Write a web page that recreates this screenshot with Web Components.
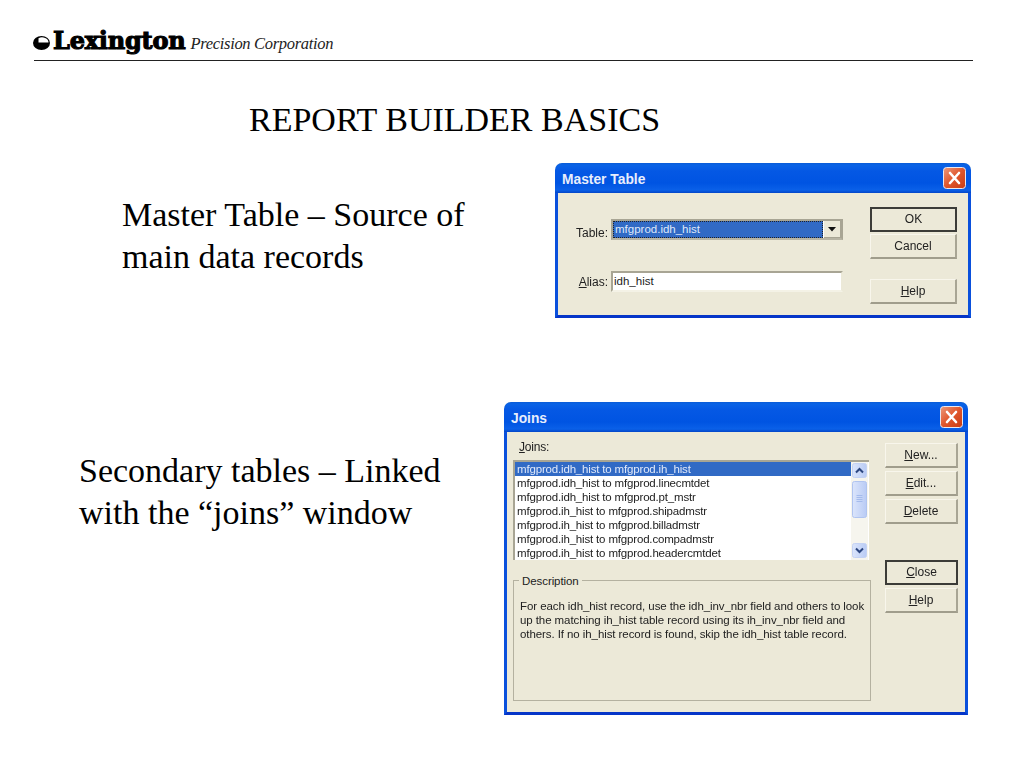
<!DOCTYPE html>
<html>
<head>
<meta charset="utf-8">
<title>Report Builder Basics</title>
<style>
  html, body { margin: 0; background: #fff; }
  body { font-family: "Liberation Serif", serif; color: #000; width: 1024px; height: 768px; overflow: hidden; }
</style>
</head>
<body>
<lex-header></lex-header>
<slide-title>REPORT BUILDER BASICS</slide-title>

<slide-row columns="555px 416px" gap="22px" height="155px" text-left="122px" text-top="31px">
  <span slot="text">Master Table – Source of<br>main data records</span>
  <xp-window caption="Master Table" width="416" height="155">
    <master-form></master-form>
  </xp-window>
</slide-row>

<slide-row columns="504px 464px" gap="84px" height="313px" text-left="79px" text-top="48px">
  <span slot="text">Secondary tables – Linked<br>with the “joins” window</span>
  <xp-window caption="Joins" width="464" height="313">
    <joins-form></joins-form>
  </xp-window>
</slide-row>

<script>
const UI_FONT = '"Liberation Sans", Arial, sans-serif';

class LexHeader extends HTMLElement {
  constructor() {
    super();
    this.attachShadow({ mode: 'open' }).innerHTML = `
      <style>
        :host {
          display: flex;
          align-items: flex-end;
          box-sizing: border-box;
          height: 61px;
          width: 939px;
          margin-left: 34px;
          border-bottom: 1px solid #222;
          padding-bottom: 5px;
        }
        svg { margin: 0 3px 5px -1px; }
        .name { font: bold 24px/28px "DejaVu Serif", serif; letter-spacing: -0.2px; -webkit-text-stroke: 1.1px #000; }
        .sub { font: italic 16.5px/22px "Liberation Serif", serif; margin-left: 5px; letter-spacing: -0.32px; color: #222; }
      </style>
      <svg width="17" height="14" viewBox="0 0 17 14">
        <ellipse cx="8.500" cy="7" rx="8.500" ry="7" fill="#000"/>
        <path d="M5.500 6.500V2.200A6.500 5 0 0 1 15.500 6.500z" fill="#fff"/>
      </svg>
      <span class="name">Lexington</span><span class="sub">Precision Corporation</span>`;
  }
}
customElements.define('lex-header', LexHeader);

class SlideTitle extends HTMLElement {
  constructor() {
    super();
    this.attachShadow({ mode: 'open' }).innerHTML = `
      <style>
        :host { display: block; margin: 38px 0 0 249px; height: 42px; font-size: 34px; line-height: 42px; white-space: nowrap; }
      </style>
      <slot></slot>`;
  }
}
customElements.define('slide-title', SlideTitle);

class SlideRow extends HTMLElement {
  constructor() {
    super();
    this.attachShadow({ mode: 'open' }).innerHTML = `
      <style>
        :host { display: grid; font-size: 34px; line-height: 42px; }
        .text { white-space: nowrap; }
      </style>
      <div class="text"><slot name="text"></slot></div>
      <div><slot></slot></div>`;
  }
  connectedCallback() {
    this.style.gridTemplateColumns = this.getAttribute('columns');
    this.style.marginTop = this.getAttribute('gap');
    this.style.height = this.getAttribute('height');
    const text = this.shadowRoot.querySelector('.text');
    text.style.paddingLeft = this.getAttribute('text-left');
    text.style.paddingTop = this.getAttribute('text-top');
  }
}
customElements.define('slide-row', SlideRow);

class XpWindow extends HTMLElement {
  constructor() {
    super();
    this.attachShadow({ mode: 'open' }).innerHTML = `
      <style>
        :host {
          display: flex;
          flex-direction: column;
          box-sizing: border-box;
          background: #ece9d8;
          border-radius: 7px 7px 0 0;
          overflow: hidden;
          font-family: ${UI_FONT};
          color: #111;
          filter: blur(0.4px);
        }
        .bar {
          flex: none;
          height: 30px;
          display: flex;
          align-items: center;
          justify-content: space-between;
          box-sizing: border-box;
          padding: 0 5px 0 7px;
          background: linear-gradient(#0a5cd6 0, #0a63e6 2px, #0558e4 8px, #0054e2 20px, #0a60e8 27px, #0446c8 30px);
          color: #e8eefc;
          font: bold 13.8px/18px ${UI_FONT};
        }
        #cap { padding-top: 3px; }
        .frame {
          flex: 1;
          display: flex;
          min-height: 0;
          border: solid #0a50dc;
          border-width: 0 3px 3px;
          border-bottom-color: #0535c8;
        }
      </style>
      <div class="bar"><span id="cap"></span>
        <svg width="23" height="22" viewBox="0 0 23 22">
          <defs><linearGradient id="r" x1="0" y1="0" x2="1" y2="1"><stop offset="0" stop-color="#ec9a7c"/><stop offset="0.5" stop-color="#e0562c"/><stop offset="1" stop-color="#c83c14"/></linearGradient></defs>
          <rect x="0.5" y="0.5" width="22" height="21" rx="3" fill="url(#r)" stroke="#e8e8f0"/>
          <path d="M7 6l9 10M16 6l-9 10" stroke="#fff" stroke-width="2.600" stroke-linecap="round"/>
        </svg>
      </div>
      <div class="frame"><slot></slot></div>`;
  }
  connectedCallback() {
    this.style.width = this.getAttribute('width') + 'px';
    this.style.height = this.getAttribute('height') + 'px';
    this.shadowRoot.getElementById('cap').textContent = this.getAttribute('caption');
  }
}
customElements.define('xp-window', XpWindow);

class XpButton extends HTMLElement {
  constructor() {
    super();
    this.attachShadow({ mode: 'open' }).innerHTML = `
      <style>
        :host {
          display: flex;
          align-items: center;
          justify-content: center;
          box-sizing: border-box;
          width: var(--btn-width, 87px);
          height: 25px;
          background: #ece9d8;
          border: 1px solid;
          border-color: #f8f6ec #a8a594 #a09d8c #f8f6ec;
          border-width: 1px 2px 2px 1px;
          font-size: 12px;
          line-height: 14px;
          color: #222;
        }
        :host([primary]) { border: 2px solid #3c3c38; padding-bottom: 2px; }
      </style>
      <slot></slot>`;
  }
}
customElements.define('xp-button', XpButton);

class XpField extends HTMLElement {
  constructor() {
    super();
    this.attachShadow({ mode: 'open' }).innerHTML = `
      <style>
        :host {
          display: flex;
          box-sizing: border-box;
          width: 232px;
          height: 21px;
          background: #fff;
          border: 2px solid #a8a594;
          border-right-color: #ece9d8;
          border-bottom-color: #f4f2e6;
          padding-left: 1px;
          font-size: 11.5px;
          line-height: 17px;
          color: #222;
        }
      </style>
      <slot></slot>`;
  }
}
customElements.define('xp-field', XpField);

class XpCombo extends HTMLElement {
  constructor() {
    super();
    this.attachShadow({ mode: 'open' }).innerHTML = `
      <style>
        :host {
          display: flex;
          gap: 1px;
          box-sizing: border-box;
          width: 232px;
          height: 21px;
          background: #fff;
          border: 2px solid #a8a594;
          border-bottom-color: #b8b5a4;
          font-size: 11.5px;
          line-height: 16px;
        }
        .value {
          flex: 1;
          background: #316ac5;
          color: #dfe8fa;
          outline: 1px dotted #222;
          outline-offset: -1px;
          padding-left: 2px;
        }
        .drop {
          width: 17px;
          background: #ece9d8;
          display: flex;
          align-items: center;
          justify-content: center;
          box-sizing: border-box;
          border-right: 1px solid #a8a594;
          border-bottom: 1px solid #a8a594;
        }
      </style>
      <div class="value"><slot></slot></div>
      <div class="drop"><svg width="9" height="5" viewBox="0 0 9 5"><path d="M0 0h8L4 4.500z" fill="#111"/></svg></div>`;
  }
}
customElements.define('xp-combo', XpCombo);

class MasterForm extends HTMLElement {
  constructor() {
    super();
    this.attachShadow({ mode: 'open' }).innerHTML = `
      <style>
        :host {
          flex: 1;
          display: grid;
          grid-template-columns: 232px 87px;
          column-gap: 27px;
          padding: 14px 11px 0 53px;
          height: 122px;
          box-sizing: border-box;
          font-size: 12px;
        }
        .left { display: flex; flex-direction: column; padding-top: 12px; gap: 31px; }
        .row { position: relative; }
        .label { position: absolute; right: 100%; margin-right: 3px; white-space: nowrap; line-height: 14px; color: #222; }
        .label.table { top: 7px; }
        .label.alias { top: 4px; }
        .right { display: flex; flex-direction: column; }
        xp-button + xp-button { margin-top: 2px; }
        xp-button.help { margin-top: 20px; }
      </style>
      <div class="left">
        <div class="row"><span class="label table">Table:</span><xp-combo>mfgprod.idh_hist</xp-combo></div>
        <div class="row"><span class="label alias"><u>A</u>lias:</span><xp-field>idh_hist</xp-field></div>
      </div>
      <div class="right">
        <xp-button primary>OK</xp-button>
        <xp-button>Cancel</xp-button>
        <xp-button class="help"><span><u>H</u>elp</span></xp-button>
      </div>`;
  }
}
customElements.define('master-form', MasterForm);

class XpScrollbar extends HTMLElement {
  constructor() {
    super();
    this.attachShadow({ mode: 'open' }).innerHTML = `
      <style>
        :host { display: block; width: 17px; height: 98px; margin-right: 1px; }
        svg { display: block; }
      </style>
      <svg width="17" height="98" viewBox="0 0 17 98">
        <defs>
          <linearGradient id="b" x1="0" x2="1" y1="0" y2="0"><stop offset="0" stop-color="#dbe5fb"/><stop offset="1" stop-color="#b9cbf5"/></linearGradient>
        </defs>
        <rect width="17" height="98" fill="#f6f5ee"/>
        <rect x="1.500" y="1.500" width="14" height="14" rx="2" fill="url(#b)" stroke="#c4d2f4"/>
        <path d="M5 10.500l3.500-3.500 3.500 3.500" fill="none" stroke="#2c4680" stroke-width="2"/>
        <rect x="1.500" y="19.500" width="14" height="36" rx="2" fill="url(#b)" stroke="#b0c4f0"/>
        <path d="M5.500 33.500h6M5.500 35.500h6M5.500 37.500h6M5.500 39.500h6" stroke="#a4bbec" stroke-width="1"/>
        <rect x="1.500" y="81.500" width="14" height="14" rx="2" fill="url(#b)" stroke="#c4d2f4"/>
        <path d="M5 86.500l3.500 3.500 3.500-3.500" fill="none" stroke="#2c4680" stroke-width="2"/>
      </svg>`;
  }
}
customElements.define('xp-scrollbar', XpScrollbar);

class XpListbox extends HTMLElement {
  constructor() {
    super();
    this.attachShadow({ mode: 'open' }).innerHTML = `
      <style>
        :host {
          display: flex;
          box-sizing: border-box;
          width: 356px;
          height: 100px;
          background: #fff;
          border: solid #a8a594;
          border-width: 2px 0 0 2px;
          overflow: hidden;
          font-size: 11.5px;
          letter-spacing: -0.17px;
          line-height: 14px;
        }
        .rows { flex: 1; min-width: 0; }
      </style>
      <div class="rows"><slot></slot></div>
      <xp-scrollbar></xp-scrollbar>`;
  }
}
customElements.define('xp-listbox', XpListbox);

class XpListItem extends HTMLElement {
  constructor() {
    super();
    this.attachShadow({ mode: 'open' }).innerHTML = `
      <style>
        :host { display: block; height: 14px; padding-left: 2px; white-space: nowrap; color: #222; }
        :host([selected]) { background: #316ac5; color: #dfe8fa; }
      </style>
      <slot></slot>`;
  }
}
customElements.define('xp-list-item', XpListItem);

class XpGroup extends HTMLElement {
  constructor() {
    super();
    this.attachShadow({ mode: 'open' }).innerHTML = `
      <style>
        :host {
          display: block;
          position: relative;
          box-sizing: border-box;
          width: 358px;
          height: 121px;
          border: 1px solid #b4b1a0;
          padding: 18px 0 0 6px;
          font-size: 11.5px;
          letter-spacing: -0.08px;
          line-height: 14px;
          color: #222;
          white-space: nowrap;
        }
        .legend { position: absolute; left: 5px; top: -7px; background: #ece9d8; padding: 0 3px; line-height: 14px; }
      </style>
      <span class="legend"><slot name="legend"></slot></span>
      <slot></slot>`;
  }
}
customElements.define('xp-group', XpGroup);

class JoinsForm extends HTMLElement {
  constructor() {
    super();
    this.attachShadow({ mode: 'open' }).innerHTML = `
      <style>
        :host {
          flex: 1;
          display: grid;
          grid-template-columns: 358px 73px;
          column-gap: 14px;
          padding: 7px 7px 0 6px;
          box-sizing: border-box;
          font-size: 12px;
          --btn-width: 73px;
        }
        .label { display: block; margin-left: 6px; line-height: 16px; height: 21px; color: #222; letter-spacing: -0.2px; }
        xp-group { margin-top: 20px; }
        .right { display: flex; flex-direction: column; padding-top: 4px; }
        xp-button + xp-button { margin-top: 3px; }
        xp-button.gap { margin-top: 36px; }
      </style>
      <div>
        <span class="label"><u>J</u>oins:</span>
        <xp-listbox>
          <xp-list-item selected>mfgprod.idh_hist to mfgprod.ih_hist</xp-list-item>
          <xp-list-item>mfgprod.idh_hist to mfgprod.linecmtdet</xp-list-item>
          <xp-list-item>mfgprod.idh_hist to mfgprod.pt_mstr</xp-list-item>
          <xp-list-item>mfgprod.ih_hist to mfgprod.shipadmstr</xp-list-item>
          <xp-list-item>mfgprod.ih_hist to mfgprod.billadmstr</xp-list-item>
          <xp-list-item>mfgprod.ih_hist to mfgprod.compadmstr</xp-list-item>
          <xp-list-item>mfgprod.ih_hist to mfgprod.headercmtdet</xp-list-item>
        </xp-listbox>
        <xp-group>
          <span slot="legend">Description</span>
          For each idh_hist record, use the idh_inv_nbr field and others to look<br>
          up the matching ih_hist table record using its ih_inv_nbr field and<br>
          others. If no ih_hist record is found, skip the idh_hist table record.
        </xp-group>
      </div>
      <div class="right">
        <xp-button><span><u>N</u>ew...</span></xp-button>
        <xp-button><span><u>E</u>dit...</span></xp-button>
        <xp-button><span><u>D</u>elete</span></xp-button>
        <xp-button primary class="gap"><span><u>C</u>lose</span></xp-button>
        <xp-button><span><u>H</u>elp</span></xp-button>
      </div>`;
  }
}
customElements.define('joins-form', JoinsForm);
</script>
</body>
</html>
